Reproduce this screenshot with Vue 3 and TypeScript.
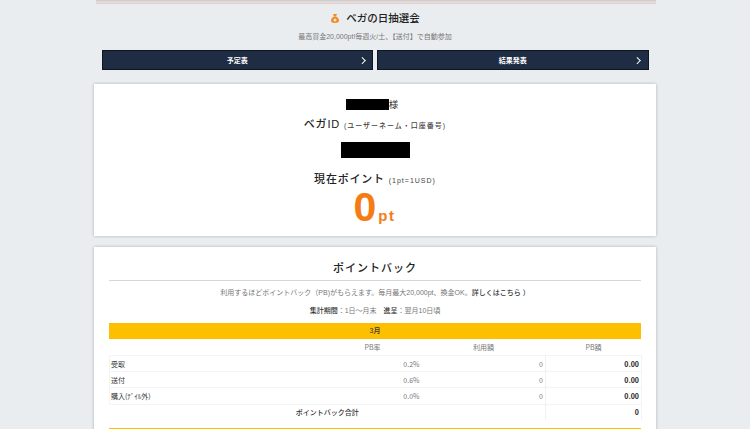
<script setup lang="ts">
const rows = [
  { name: '受取', rate: '0.2%', used: '0', pb: '0.00' },
  { name: '送付', rate: '0.6%', used: '0', pb: '0.00' },
  { name: '購入(ﾃﾞｲﾙ外)', rate: '0.0%', used: '0', pb: '0.00' },
]
</script>

<template>
  <div class="page">
    <div class="wrap">
      <div class="topline"></div>
      <section class="lottery">
        <h2 class="lot-title">
          <svg class="bag" width="10" height="11" viewBox="0 0 10 11">
            <path d="M3 1h4L6 3.2H4z" fill="#f08a24" />
            <path d="M3.8 3.4h2.4C8 4.6 9 6.200 9 7.600 9 9.400 7.400 10 5 10S1 9.400 1 7.600C1 6.200 2 4.600 3.800 3.400z" fill="#f08a24" />
            <circle cx="5" cy="7" r="1.500" fill="#fde3c4" />
          </svg>
          ベガの日抽選会
        </h2>
        <p class="lot-sub">最高賞金20,000pt!毎週火/土、【送付】で自動参加</p>
        <div class="btns">
          <a class="btn"><span>予定表</span><i class="chev"></i></a>
          <a class="btn"><span>結果発表</span><i class="chev"></i></a>
        </div>
      </section>

      <section class="card account">
        <div class="name"><span class="mask mask-name"></span>様</div>
        <div class="label id-label">ベガID <small>(ユーザーネーム・口座番号)</small></div>
        <div class="mask mask-id"></div>
        <div class="label">現在ポイント <small>(1pt=1USD)</small></div>
        <div class="points">0<span>pt</span></div>
      </section>

      <section class="card back">
        <h2 class="back-title">ポイントバック</h2>
        <p class="back-text">利用するほどポイントバック（PB)がもらえます。毎月最大20,000pt、換金OK。<b>詳しくはこちら ）</b></p>
        <p class="back-period"><b>集計期間</b>：1日～月末　<b>進呈</b>：翌月10日頃</p>
        <div class="month">3月</div>
        <table>
          <thead>
            <tr><th></th><th>PB率</th><th>利用額</th><th>PB額</th></tr>
          </thead>
          <tbody>
            <tr v-for="r in rows" :key="r.name">
              <td class="rname">{{ r.name }}</td>
              <td>{{ r.rate }}</td>
              <td class="used">{{ r.used }}</td>
              <td class="strong">{{ r.pb }}</td>
            </tr>
            <tr class="total">
              <td colspan="3" class="total-label">ポイントバック合計</td>
              <td class="strong">0</td>
            </tr>
          </tbody>
        </table>
        <div class="month next"></div>
      </section>
    </div>
  </div>
</template>

<style>
html, body { margin: 0; padding: 0; background: #e9edf0; overflow: hidden; }
</style>

<style scoped>
.page {
  height: 429px;
  overflow: hidden;
  background: #e9edf0;
  font-family: "Liberation Sans", "Noto Sans CJK JP", sans-serif;
  color: #333;
}
.wrap { width: 562px; margin: 0 auto; }
.topline {
  height: 3px;
  margin: 0 0 0 2px;
  background: linear-gradient(#c9cbcd, #e3e5e7);
  border-bottom: 1px solid #f3c9c2;
}
.lottery { padding: 0 7.500px; height: 80px; box-sizing: border-box; }
.lot-title {
  margin: 0;
  padding-top: 6px;
  height: 17px;
  line-height: 17px;
  font-size: 10.500px;
  font-weight: 500;
  color: #222;
  text-align: center;
  display: flex;
  justify-content: center;
  align-items: center;
  gap: 6px;
}
.lot-sub {
  margin: 4px 0 0;
  height: 12px;
  line-height: 12px;
  font-size: 7px;
  color: #777;
  text-align: center;
}
.btns { display: flex; gap: 4px; margin-top: 7px; }
.btn {
  flex: 1;
  height: 20px;
  box-sizing: border-box;
  background: #1f2d44;
  border: 1px solid #10161f;
  color: #fff;
  font-size: 7px;
  font-weight: 700;
  display: flex;
  align-items: center;
  justify-content: center;
  position: relative;
}
.chev {
  position: absolute;
  right: 8px;
  top: 6.500px;
  width: 3.500px;
  height: 3.500px;
  border-top: 1px solid #fff;
  border-right: 1px solid #fff;
  transform: rotate(45deg);
}
.card {
  background: #fff;
  box-shadow: 0 0 3px rgba(0, 0, 0, 0.25);
}
.account {
  height: 152px;
  text-align: center;
  display: flex;
  flex-direction: column;
  align-items: center;
}
.name {
  margin-top: 14px;
  margin-right: 6px;
  height: 12px;
  display: flex;
  align-items: center;
  font-size: 9.500px;
  color: #333;
}
.mask { background: #000; display: block; }
.mask-name { width: 43px; height: 11px; }
.label {
  font-size: 11px;
  font-weight: 500;
  color: #222;
  line-height: 16px;
  letter-spacing: 0.800px;
}
.label small { font-size: 7px; letter-spacing: 1px; color: #444; }
.id-label { margin-top: 6px; }
.mask-id { width: 69px; height: 16px; margin: 8px 0 13px; }
.points {
  font-size: 41px;
  font-weight: 700;
  line-height: 36px;
  color: #f57c14;
  margin-top: 0;
  margin-right: 1px;
}
.points span { font-size: 15px; letter-spacing: 1.500px; margin-left: 2px; }
.back {
  margin-top: 11px;
  height: 200px;
  padding: 0 15px;
}
.back-title {
  margin: 0;
  padding-top: 12px;
  height: 21px;
  line-height: 18px;
  font-size: 11px;
  font-weight: 500;
  letter-spacing: 1px;
  text-align: center;
  color: #222;
  border-bottom: 1px solid #d9d6cf;
}
.back-text {
  margin: 6px 0 0;
  height: 12px;
  line-height: 12px;
  font-size: 7px;
  color: #777;
  text-align: center;
  white-space: nowrap;
}
.back-text b, .back-period b { color: #333; font-weight: 500; }
.back-period {
  margin: 6px 0 0;
  height: 12px;
  line-height: 12px;
  font-size: 7px;
  color: #777;
  text-align: center;
}
.month {
  margin-top: 6px;
  height: 16px;
  line-height: 16px;
  background: #fdc000;
  color: #333;
  font-size: 7px;
  font-weight: 500;
  text-align: center;
}
.month.next { margin-top: 8px; height: 3px; }
table {
  width: 532px;
  border-collapse: collapse;
  table-layout: fixed;
  font-family: "Noto Sans CJK JP", "Liberation Sans", sans-serif;
  font-size: 7px;
}
th {
  height: 16px;
  padding: 0;
  font-weight: 400;
  color: #777;
  text-align: center;
}
th:nth-child(1) { width: 214px; }
th:nth-child(2) { width: 98px; }
th:nth-child(3) { width: 124px; }
th:nth-child(4) { width: 96px; }
td {
  height: 15.200px;
  padding: 0 2px 0 0;
  color: #777;
  text-align: right;
  border-top: 1px solid #f3f4f5;
}
td.used, .total-label { border-right: 1px solid #f0f1f2; }
td.rname {
  padding-left: 1px;
  text-align: left;
  color: #333;
  border-left: 1px solid #f3f4f5;
}
td.strong { color: #222; font-weight: 700; border-right: 1px solid #f3f4f5; }
.total td { border-top: 1px solid #f3f4f5; }
td.total-label {
  color: #333;
  font-weight: 500;
  text-align: center;
  padding: 0;
}
</style>
